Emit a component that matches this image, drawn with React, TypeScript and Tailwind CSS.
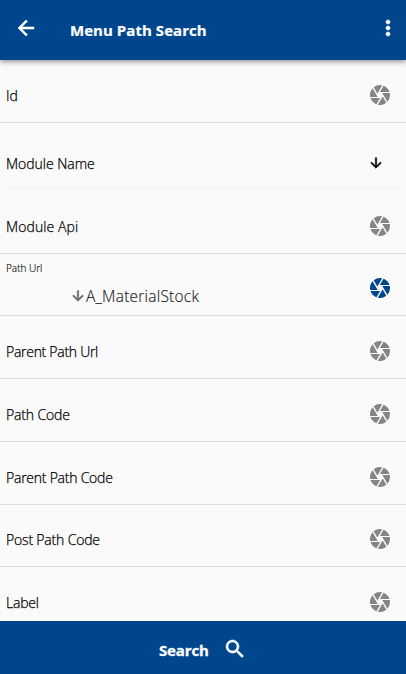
import { MdArrowBack, MdArrowDownward, MdCamera, MdMoreVert, MdSearch } from "react-icons/md";

type Field = { label: string; height: string; spacing: string };

function FieldRow({ label, height, spacing }: Field) {
  return (
    <div className={`flex shrink-0 items-end justify-between border-b border-[#dedede] pr-[14px] pb-[15px] pl-1.5 ${height}`}>
      <span className={`relative top-px text-[14px] leading-6 font-light whitespace-nowrap [-webkit-text-stroke:0.25px] ${spacing}`}>{label}</span>
      <MdCamera className="size-6 text-[#858585]" />
    </div>
  );
}

const lowerFields: Field[] = [
  { label: "Parent Path Url", height: "h-[63px]", spacing: "tracking-[-0.28px]" },
  { label: "Path Code", height: "h-[63px]", spacing: "tracking-[-0.15px]" },
  { label: "Parent Path Code", height: "h-[63px]", spacing: "tracking-[-0.24px]" },
  { label: "Post Path Code", height: "h-[62px]", spacing: "tracking-[-0.18px]" },
  { label: "Label", height: "h-[63px]", spacing: "tracking-[-0.2px]" },
];

export default function App() {
  return (
    <div className="flex h-[674px] w-full flex-col overflow-hidden bg-[#fafafa] font-['Open_Sans','Noto_Sans',sans-serif] text-black">
      <header className="z-10 flex h-[60px] shrink-0 items-center bg-[#00468c] pr-1.5 pb-1 pl-[14px] text-white shadow-[0_2px_5px_rgba(0,0,0,0.4)]">
        <MdArrowBack className="size-6 stroke-[0.6] [&_[fill=none]]:stroke-none" />
        <h1 className="mt-[3px] ml-8 flex-1 text-[15px] leading-6 font-bold tracking-[0.05px] whitespace-nowrap [-webkit-text-stroke:0.2px]">Menu Path Search</h1>
        <MdMoreVert className="size-6 stroke-[0.6] [&_[fill=none]]:stroke-none" />
      </header>

      <main className="flex min-h-0 flex-1 flex-col overflow-hidden">
        <FieldRow label="Id" height="h-[63px]" spacing="tracking-[0px]" />
        <div className="mx-1.5 flex h-[65px] shrink-0 items-end justify-between border-b border-[#f1f1f1] pr-4 pb-3">
          <span className="relative top-px text-[14px] leading-6 font-light tracking-[-0.02px] whitespace-nowrap [-webkit-text-stroke:0.25px]">Module Name</span>
          <MdArrowDownward className="mb-1 size-4 stroke-[0.8] text-black [&_[fill=none]]:stroke-none" />
        </div>
        <FieldRow label="Module Api" height="h-[66px]" spacing="tracking-[0.1px]" />

        <div className="flex h-[62px] shrink-0 items-end justify-between border-b border-[#dedede] pr-[14px] pl-1.5">
          <div className="flex h-full flex-col">
            <span className="mt-[7px] text-[10px] leading-[14px] font-light tracking-[0px] [-webkit-text-stroke:0.15px]">Path Url</span>
            <div className="mt-[9px] ml-[64px] flex items-center text-[#222]">
              <MdArrowDownward className="size-4 stroke-1 text-[#666] [&_[fill=none]]:stroke-none" />
              <span className="text-[15.5px] leading-6 font-light tracking-[0.22px] whitespace-nowrap [-webkit-text-stroke:0.15px]">A_MaterialStock</span>
            </div>
          </div>
          <MdCamera className="mb-[15px] size-6 text-[#00468c]" />
        </div>

        {lowerFields.map((field) => (
          <FieldRow key={field.label} {...field} />
        ))}
      </main>

      <button className="flex h-[53px] shrink-0 items-center bg-[#00468c] pl-[159px] text-white">
        <span className="mt-[5px] text-[15px] leading-6 font-bold tracking-[-0.15px] [-webkit-text-stroke:0.3px]">Search</span>
        <MdSearch className="mt-0.5 ml-3.5 size-6 stroke-[0.6] [&_[fill=none]]:stroke-none" />
      </button>
    </div>
  );
}
